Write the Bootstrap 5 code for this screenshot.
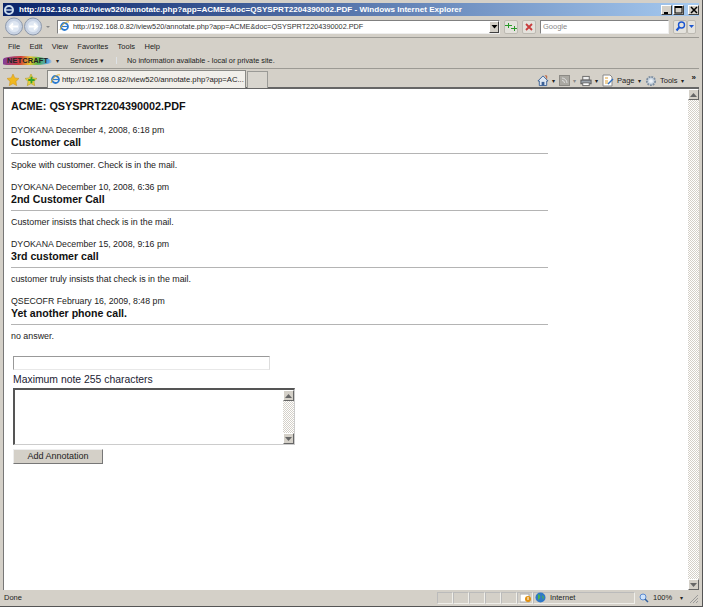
<!DOCTYPE html>
<html lang="en"><head><meta charset="utf-8"><title>IE</title>
<link rel="stylesheet" href="https://cdn.jsdelivr.net/npm/bootstrap@5.3.0/dist/css/bootstrap.min.css">
<style>
html,body{height:607px;overflow:hidden;background:#d4d0c8}
body{width:703px;font-family:"Liberation Sans",sans-serif;font-size:7.5px;color:#222;line-height:1}
.win{height:607px;padding:3px;border-right:1px solid #555;border-bottom:1px solid #555}
.titlebar{height:13px;background:linear-gradient(90deg,#0a246a,#a6caf0);color:#fff;font:bold 8.1px "Liberation Sans",sans-serif;padding-left:0}
.wbtn{width:11px;height:10px;background:#d4d0c8;border:1px solid;border-color:#fff #404040 #404040 #fff;margin-left:1px;color:#000}
.addr{height:22px;padding:0 0 0 2px;border-bottom:1px solid #9c9a94}
.urlbox{width:443px;height:14px;background:#fff;border:1px solid;border-color:#808080 #eee #eee #808080;margin-left:6px;font-size:7.3px;color:#333}
.urlico{margin:0 3px 0 1px}
.srch{width:129px;height:14px;background:#fff;border:1px solid;border-color:#808080 #eee #eee #808080;color:#888;font-size:7.5px;padding-left:2px}
.mbtn{width:14px;height:14px;background:#e4e2dc;border:1px solid #bdbab2;border-radius:2px}
.combo{width:10px;height:12px;background:#d4d0c8;border:1px solid;border-color:#fff #404040 #404040 #fff}
.menus{height:15px;gap:9.4px;padding:2px 0 0 5px;font-size:7.5px}
.nc{height:16px;padding-left:0;font-size:7.3px;border-bottom:1px solid #9c9a94}
.nclogo{width:49px;height:9px;font:bold 7.5px/9px "Liberation Sans",sans-serif;background:linear-gradient(100deg,#7a3fa0 0,#cf3a3a 35%,#e9c22e 55%,#4cb04c 72%,#58a0e8 92%,transparent 100%);border-radius:60% 100% 60% 20%;color:#222;padding-left:4px;letter-spacing:.1px}
.svc{margin-left:11px}
.ncinfo{margin-left:12px;padding-left:8px}
.tabs{height:20px;padding-top:1px;border-bottom:2px solid #666}
.tab1{width:199px;height:18px;background:#f1efea;border:1px solid #8a8a86;border-bottom:0;font-size:7.7px;padding-left:2px;margin-left:10px}
.tabico{margin-right:1px}
.tab2{width:21px;height:17px;background:#d8d5ce;border:1px solid #9a9a96;border-bottom:0;margin-top:1px;margin-left:1px}
.tools{gap:3.5px;font-size:7.5px;padding-right:3px}
.pagewrap{height:501px;border-left:1px solid #777}
.content{background:#fff;flex:1;min-width:0;padding:10px 0 0 7px;font-family:"Liberation Sans",sans-serif;color:#222}
.sbar{width:11px;background:repeating-conic-gradient(#d4d0c8 0 25%,#fff 0 50%) 0 0/2px 2px}
.sarr{height:11px;background:#d4d0c8;border:1px solid;border-color:#fff #666 #666 #fff}
.doc-title{font-size:10.8px;font-weight:700;line-height:14px;margin:0 0 12px;color:#111}
.note{width:537px;height:57px}
.note-meta{font-size:8.75px;line-height:11px}
.note-title{font-size:10.6px;font-weight:700;line-height:13px;margin:0;color:#111}
.note-rule{height:1px;background:#b4b4b4;margin:4px 0 5px;opacity:1;border:0}
.note-body{font-size:8.9px;line-height:12px;margin:0}
.frm{padding-left:2px;margin-top:3px}
.txt{display:block;width:257px;height:14px;border:1px solid;border-color:#999 #ddd #e8e8e8 #999;padding:0;margin-bottom:3px;background:#fff}
.lbl{font-size:10.4px;line-height:13px;margin-bottom:2px;color:#223}
.ta{width:282px;height:57px;border:1px solid;border-color:#555 #ccc #ccc #555;border-width:2px 1px 1px 2px;background:#fff}
.tabar{width:11px;background:repeating-conic-gradient(#d4d0c8 0 25%,#fff 0 50%) 0 0/2px 2px}
.subm{width:90px;height:15px;background:#d4d0c8;border:1px solid;border-color:#eee #777 #777 #eee;font-size:9px;line-height:13px;margin-top:4px;padding:0;color:#222;display:block;font-family:"Liberation Sans",sans-serif}
.status{height:13px;font-size:7.5px;padding-left:1px;margin-top:1px}
.cell{width:16px;height:12px;border:1px solid;border-color:#bbb #f0efea #f0efea #bbb}
.zone{width:102px;height:12px;border:1px solid;border-color:#bbb #f0efea #f0efea #bbb;padding-left:1px}
.arrw{font-size:6px}
</style></head><body>
<div class="win d-flex flex-column">
 <div class="titlebar d-flex align-items-center flex-shrink-0">
  <svg class="flex-shrink-0 me-1" width="12" height="12" viewBox="0 0 12 12"><circle cx="6" cy="6" r="4" fill="none" stroke="#cde" stroke-width="2"/><path d="M2 6h8" stroke="#cde" stroke-width="1.400"/></svg>
  <span class="flex-grow-1 text-nowrap">http://192.168.0.82/iview520/annotate.php?app=ACME&amp;doc=QSYSPRT2204390002.PDF - Windows Internet Explorer</span>
  <span class="wbtn d-flex align-items-end justify-content-center"><svg width="7" height="7"><path d="M1 6h4" stroke="#000" stroke-width="2"/></svg></span>
  <span class="wbtn d-flex align-items-center justify-content-center"><svg width="9" height="8"><rect x="1" y=".5" width="7" height="6.500" fill="none" stroke="#000"/><path d="M1 1.500h7" stroke="#000"/></svg></span>
  <span class="wbtn d-flex align-items-center justify-content-center ms-1 me-0"><svg width="8" height="8"><path d="M1 1l6 6M7 1l-6 6" stroke="#000" stroke-width="1.500"/></svg></span>
 </div>
 <div class="addr d-flex align-items-center flex-shrink-0">
  <svg class="flex-shrink-0" width="46" height="19" viewBox="0 0 46 19"><circle cx="9" cy="9.500" r="8.500" fill="#c8d3e4" stroke="#8d98ab"/><circle cx="9" cy="9.500" r="5.500" fill="#dfe7f2"/><path d="M13 9.500H5M8 6.500l-3 3 3 3" stroke="#fff" stroke-width="1.800" fill="none"/><circle cx="28" cy="9.500" r="8.500" fill="#c8d3e4" stroke="#8d98ab"/><circle cx="28" cy="9.500" r="5.500" fill="#dfe7f2"/><path d="M24 9.500h8M29 6.500l3 3-3 3" stroke="#fff" stroke-width="1.800" fill="none"/><path d="M41 9l2 2 2-2z" fill="#888"/></svg>
  <div class="urlbox d-flex align-items-center flex-shrink-0">
   <svg class="urlico flex-shrink-0" width="11" height="11" viewBox="0 0 11 11"><circle cx="5.500" cy="5.500" r="3.500" fill="none" stroke="#2b7bd0" stroke-width="1.800"/><path d="M2 5.500h7" stroke="#2b7bd0" stroke-width="1.200"/><path d="M1 9C3 3 7 0 10 1" stroke="#e0b030" fill="none"/></svg>
   <span class="flex-grow-1 text-nowrap overflow-hidden">http://192.168.0.82/iview520/annotate.php?app=ACME&amp;doc=QSYSPRT2204390002.PDF</span>
   <span class="combo d-flex align-items-center justify-content-center flex-shrink-0"><svg width="7" height="5"><path d="M.5 1h6L3.500 4.500z" fill="#000"/></svg></span>
  </div>
  <span class="mbtn d-flex align-items-center justify-content-center ms-1 flex-shrink-0"><svg width="12" height="9" viewBox="0 0 12 9"><path d="M0 3h3V1h1v2h3v1H4v2H3V4H0zM6 6h3V4h1v2h2v1h-2v2H9V7H6z" fill="#2a9a2a"/></svg></span>
  <span class="mbtn d-flex align-items-center justify-content-center ms-1 flex-shrink-0"><svg width="10" height="10" viewBox="0 0 10 10"><path d="M2 2l6 6M8 2L2 8" stroke="#c83c3c" stroke-width="1.800"/></svg></span>
  <div class="srch d-flex align-items-center ms-1 flex-shrink-0">Google</div>
  <span class="mbtn d-flex align-items-center justify-content-center ms-1 flex-shrink-0"><svg width="11" height="11" viewBox="0 0 11 11"><circle cx="6.500" cy="4" r="3" fill="none" stroke="#1a55d0" stroke-width="1.400"/><path d="M4.500 6L1.500 9.500" stroke="#1a55d0" stroke-width="2"/></svg></span>
  <span class="mbtn d-flex align-items-center justify-content-center flex-shrink-0" style="width:9px"><svg width="5" height="3"><path d="M0 0h5L2.500 3z" fill="#1a55d0"/></svg></span>
 </div>
 <div class="menus d-flex align-items-center flex-shrink-0"><span>File</span><span>Edit</span><span>View</span><span>Favorites</span><span>Tools</span><span>Help</span></div>
 <div class="nc d-flex align-items-center flex-shrink-0">
  <span class="nclogo d-inline-block">NETCRAFT</span>
  <span class="arrw ms-1">▾</span>
  <span class="svc">Services ▾</span>
  <span class="ncinfo border-start">&nbsp;No information available - local or private site.</span>
 </div>
 <div class="tabs d-flex align-items-start flex-shrink-0">
  <svg class="ms-1 mt-1 flex-shrink-0" width="12" height="12" viewBox="0 0 13 13"><path d="M6.500 0l2 4.200 4.500.6-3.300 3.200.8 4.600-4-2.200-4 2.200.8-4.600L0 4.800l4.500-.6z" fill="#f0b820" stroke="#c88a10" stroke-width=".5"/></svg>
  <svg class="mt-1 flex-shrink-0" style="margin-left:6px" width="12" height="12" viewBox="0 0 13 13"><path d="M6.500 0l2 4.200 4.500.6-3.300 3.200.8 4.600-4-2.200-4 2.200.8-4.600L0 4.800l4.500-.6z" fill="#e8d040" stroke="#a89010" stroke-width=".5"/><path d="M7 3v7M3.500 6.500h7" stroke="#30a030" stroke-width="2"/></svg>
  <div class="tab1 d-flex align-items-center flex-shrink-0"><svg class="tabico flex-shrink-0" width="11" height="11" viewBox="0 0 11 11"><circle cx="5.500" cy="5.500" r="3.500" fill="none" stroke="#2b7bd0" stroke-width="1.800"/><path d="M2 5.500h7" stroke="#2b7bd0" stroke-width="1.200"/><path d="M1 9C3 3 7 0 10 1" stroke="#e0b030" fill="none"/></svg><span class="text-nowrap">http://192.168.0.82/iview520/annotate.php?app=AC...</span></div>
  <div class="tab2 flex-shrink-0"></div>
  <div class="tools d-flex align-items-center ms-auto mt-1">
   <svg width="12" height="13" viewBox="0 0 13 13"><path d="M1 7l5.500-5.500L12 7h-1.500v5h-8V7z" fill="#dde6f2" stroke="#3a5f95"/><rect x="5" y="8" width="3" height="4" fill="#3a5f95"/><path d="M8.500 1.500h2v3" stroke="#b8552a" fill="none"/></svg><span class="arrw">▾</span>
   <svg width="11" height="11"><rect x=".5" y=".5" width="10" height="10" fill="#aaa8a2" stroke="#8c8a85"/><path d="M3 3a5 5 0 0 1 5 5M3 5.500A2.500 2.500 0 0 1 5.500 8" stroke="#ddd" fill="none"/></svg><span class="arrw" style="color:#888">▾</span>
   <svg width="12" height="12" viewBox="0 0 13 12"><rect x="3" y="1" width="7" height="4" fill="#eee" stroke="#666"/><rect x="1" y="5" width="11" height="4" fill="#9aa3ac" stroke="#555"/><rect x="3" y="8" width="7" height="3" fill="#fff" stroke="#666"/></svg><span class="arrw">▾</span>
   <svg width="12" height="13" viewBox="0 0 12 13"><path d="M1 1h7l2 2v9H1z" fill="#fff" stroke="#8a8a8a"/><path d="M3 4h3M3 7h3M3 9h3" stroke="#e0a030"/><path d="M6 10l5-5" stroke="#3070c0" stroke-width="1.500"/></svg><span>Page</span><span class="arrw">▾</span>
   <svg width="12" height="12" viewBox="0 0 13 13"><circle cx="6.500" cy="6.500" r="4.500" fill="#c8d4e0" stroke="#7d8ea0" stroke-width="2" stroke-dasharray="2 1"/><circle cx="6.500" cy="6.500" r="2" fill="#eef2f7"/></svg><span>Tools</span><span class="arrw">▾</span>
   <span class="ms-1 align-self-start fw-bold" style="font-size:8px;color:#111">»</span>
  </div>
 </div>
 <div class="pagewrap d-flex flex-shrink-0">
  <main class="content">
   <h1 class="doc-title">ACME: QSYSPRT2204390002.PDF</h1>
   <section class="note"><div class="note-meta">DYOKANA December 4, 2008, 6:18 pm</div><h2 class="note-title">Customer call</h2><hr class="note-rule"><p class="note-body">Spoke with customer. Check is in the mail.</p></section>
   <section class="note"><div class="note-meta">DYOKANA December 10, 2008, 6:36 pm</div><h2 class="note-title">2nd Customer Call</h2><hr class="note-rule"><p class="note-body">Customer insists that check is in the mail.</p></section>
   <section class="note"><div class="note-meta">DYOKANA December 15, 2008, 9:16 pm</div><h2 class="note-title">3rd customer call</h2><hr class="note-rule"><p class="note-body">customer truly insists that check is in the mail.</p></section>
   <section class="note"><div class="note-meta">QSECOFR February 16, 2009, 8:48 pm</div><h2 class="note-title">Yet another phone call.</h2><hr class="note-rule"><p class="note-body">no answer.</p></section>
   <form class="frm">
    <input class="txt" type="text" aria-label="Note title">
    <div class="lbl">Maximum note 255 characters</div>
    <div class="ta d-flex justify-content-end"><div class="tabar d-flex flex-column justify-content-between"><div class="sarr d-flex align-items-center justify-content-center"><svg width="7" height="4"><path d="M3.500 0L7 4H0z" fill="#666"/></svg></div><div class="sarr d-flex align-items-center justify-content-center"><svg width="7" height="4"><path d="M3.500 4L7 0H0z" fill="#666"/></svg></div></div></div>
    <button type="button" class="subm">Add Annotation</button>
   </form>
  </main>
  <div class="sbar d-flex flex-column justify-content-between">
   <div class="sarr d-flex align-items-center justify-content-center"><svg width="7" height="4"><path d="M3.500 0L7 4H0z" fill="#666"/></svg></div>
   <div class="sarr d-flex align-items-center justify-content-center"><svg width="7" height="4"><path d="M3.500 4L7 0H0z" fill="#666"/></svg></div>
  </div>
 </div>
 <div class="status d-flex align-items-center flex-shrink-0">
  <span class="flex-grow-1">Done</span>
  <span class="cell"></span><span class="cell"></span><span class="cell"></span><span class="cell"></span><span class="cell"></span>
  <span class="cell d-flex align-items-center justify-content-center"><svg width="11" height="10"><rect x="0" y="1" width="9" height="8" fill="#fff" stroke="#aaa"/><circle cx="8" cy="6" r="3" fill="#e09010"/><path d="M8 4v3" stroke="#fff"/></svg></span>
  <div class="zone d-flex align-items-center"><svg class="me-1 flex-shrink-0" width="11" height="11"><circle cx="5.500" cy="5.500" r="5" fill="#2f78c8"/><path d="M3 2c2 1 3 2 2 4S3 7 3 9M7 3l2 2-1 3z" fill="#4caf50"/></svg>Internet</div>
  <div class="d-flex align-items-center ms-1" style="width:44px"><svg class="me-1 flex-shrink-0" width="10" height="10"><circle cx="4" cy="4" r="3" fill="#cfe3fa" stroke="#5c8ad0"/><path d="M6 6l3 3" stroke="#3060a0" stroke-width="1.500"/></svg>100%<span class="arrw ms-auto">▾</span></div>
  <svg width="12" height="12" class="ms-1 flex-shrink-0"><path d="M11 3L3 11M11 6l-5 5M11 9l-2 2" stroke="#999"/></svg>
 </div>
</div>
</body></html>
